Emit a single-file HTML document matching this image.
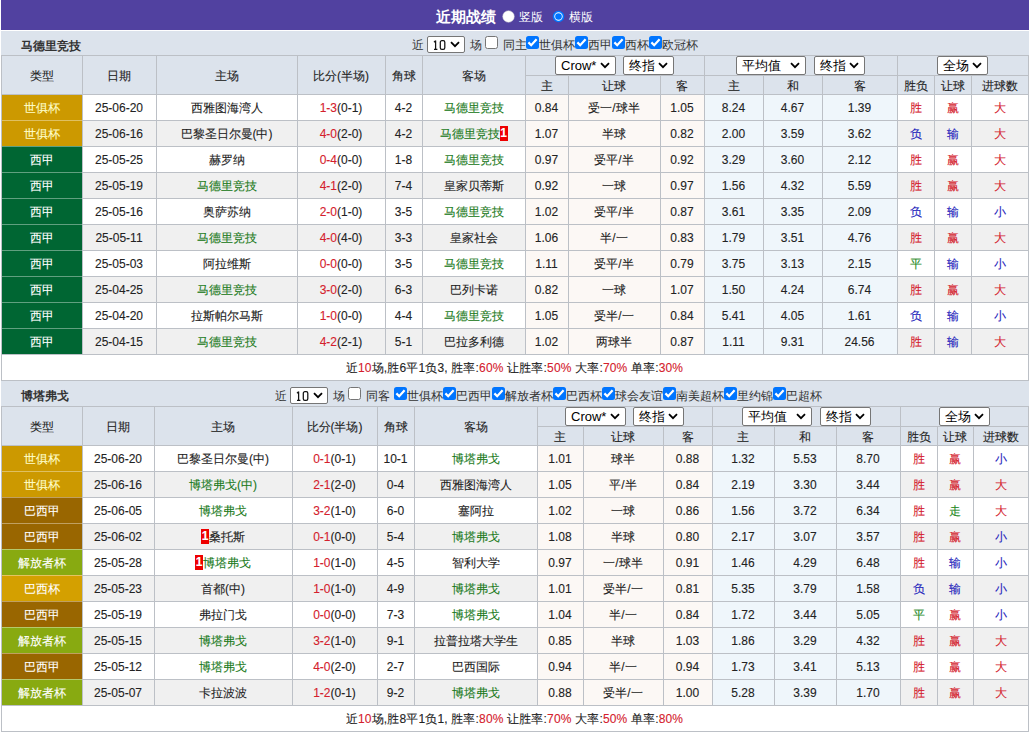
<!DOCTYPE html>
<html><head><meta charset="utf-8"><title>近期战绩</title>
<style>
html,body{margin:0;padding:0;background:#fff;}
body{width:1033px;height:734px;position:relative;overflow:hidden;font-family:"Liberation Sans",sans-serif;font-size:12px;color:#222;}
body>div{position:absolute;}
.t{-webkit-text-stroke:0.1px currentColor;text-align:center;white-space:nowrap;overflow:hidden;}
.l{white-space:nowrap;}
.sel{border:1px solid #767676;border-radius:2px;background:#fff;color:#000;box-sizing:content-box;}
.bd{display:inline-block;background:#e00;color:#fff;font-weight:bold;width:8px;height:15px;line-height:15px;text-align:center;vertical-align:middle;font-size:12px;position:relative;top:-1px;}
</style></head><body>
<div style="left:1px;top:0px;width:1028px;height:30px;background:#5141a0;"></div>
<div class="l" style="left:436px;top:8px;font-size:15px;font-weight:bold;color:#fff;line-height:18px">近期战绩</div>
<div style="left:502px;top:10px;width:13px;height:13px"><svg width="13" height="13"><circle cx="6.5" cy="6.5" r="5.8" fill="#fff" stroke="#ccc" stroke-width="0.5"/></svg></div>
<div class="l" style="left:519px;top:10px;font-size:12px;color:#fff;line-height:15px">竖版</div>
<div style="left:552px;top:10px;width:13px;height:13px"><svg width="13" height="13"><circle cx="6.5" cy="6.5" r="5" fill="#fff" stroke="#0075ff" stroke-width="1.6"/><circle cx="6.5" cy="6.5" r="3.3" fill="#0075ff"/></svg></div>
<div class="l" style="left:569px;top:10px;font-size:12px;color:#fff;line-height:15px">横版</div>
<div style="left:1px;top:30px;width:1028px;height:1px;background:#fff;"></div>
<div style="left:1px;top:31px;width:1028px;height:24px;background:#dce3ec;"></div>
<div class="l" style="left:21px;top:39px;font-weight:bold;font-size:12px;line-height:14px;color:#333">马德里竞技</div>
<div class="l" style="left:412px;top:38px;line-height:14px;color:#333">近</div>
<div class="sel" style="left:427px;top:36px;width:36px;height:15px;"><span style="position:absolute;left:5px;top:0;line-height:15px;font-size:13px"><svg width="22" height="15" style="position:absolute;left:-5px;top:0"><path d="M7.6 3.6 V12.3 M6 5.2 L7.6 3.6 M6 12.4 H9.4" stroke="#111" stroke-width="1.25" fill="none"/><rect x="12.3" y="3.7" width="4.5" height="8.6" rx="1.6" stroke="#111" stroke-width="1.25" fill="none"/></svg></span><span style="position:absolute;right:4px;top:4px;line-height:0"><svg width="10" height="7" viewBox="0 0 10 7"><path d="M1 1.2 L5 5.2 L9 1.2" stroke="#000" stroke-width="1.8" fill="none"/></svg></span></div>
<div class="l" style="left:470px;top:38px;line-height:14px;color:#333">场</div>
<div style="left:485px;top:36px;width:13px;height:13px"><svg width="13" height="13" viewBox="0 0 13 13"><rect x="0.5" y="0.5" width="12" height="12" rx="2" fill="#fff" stroke="#767676" stroke-width="1"/></svg></div>
<div class="l" style="left:503px;top:38px;line-height:14px;color:#333">同主</div>
<div style="left:526px;top:36px;width:13px;height:13px"><svg width="13" height="13" viewBox="0 0 13 13"><rect x="0" y="0" width="13" height="13" rx="2.5" fill="#0075ff"/><path d="M2.4 6.4 L5.2 9.2 L10.6 3.3" stroke="#fff" stroke-width="2.2" fill="none" stroke-linecap="butt"/></svg></div>
<div class="l" style="left:539px;top:38px;line-height:14px;color:#333">世俱杯</div>
<div style="left:575px;top:36px;width:13px;height:13px"><svg width="13" height="13" viewBox="0 0 13 13"><rect x="0" y="0" width="13" height="13" rx="2.5" fill="#0075ff"/><path d="M2.4 6.4 L5.2 9.2 L10.6 3.3" stroke="#fff" stroke-width="2.2" fill="none" stroke-linecap="butt"/></svg></div>
<div class="l" style="left:588px;top:38px;line-height:14px;color:#333">西甲</div>
<div style="left:612px;top:36px;width:13px;height:13px"><svg width="13" height="13" viewBox="0 0 13 13"><rect x="0" y="0" width="13" height="13" rx="2.5" fill="#0075ff"/><path d="M2.4 6.4 L5.2 9.2 L10.6 3.3" stroke="#fff" stroke-width="2.2" fill="none" stroke-linecap="butt"/></svg></div>
<div class="l" style="left:625px;top:38px;line-height:14px;color:#333">西杯</div>
<div style="left:649px;top:36px;width:13px;height:13px"><svg width="13" height="13" viewBox="0 0 13 13"><rect x="0" y="0" width="13" height="13" rx="2.5" fill="#0075ff"/><path d="M2.4 6.4 L5.2 9.2 L10.6 3.3" stroke="#fff" stroke-width="2.2" fill="none" stroke-linecap="butt"/></svg></div>
<div class="l" style="left:662px;top:38px;line-height:14px;color:#333">欧冠杯</div>
<div style="left:1px;top:55px;width:1028px;height:39px;background:#dce3ec;"></div>
<div style="left:1px;top:94px;width:1027px;height:26px;background:#fff;"></div>
<div style="left:525px;top:94px;width:179px;height:26px;background:#fcf8f5;"></div>
<div style="left:704px;top:94px;width:193px;height:26px;background:#eff6fb;"></div>
<div style="left:1px;top:94px;width:81px;height:26px;background:#cc9900;"></div>
<div style="left:1px;top:120px;width:1027px;height:26px;background:#f0f0f0;"></div>
<div style="left:525px;top:120px;width:179px;height:26px;background:#fcf8f5;"></div>
<div style="left:704px;top:120px;width:193px;height:26px;background:#eff6fb;"></div>
<div style="left:1px;top:120px;width:81px;height:26px;background:#cc9900;"></div>
<div style="left:1px;top:146px;width:1027px;height:26px;background:#fff;"></div>
<div style="left:525px;top:146px;width:179px;height:26px;background:#fcf8f5;"></div>
<div style="left:704px;top:146px;width:193px;height:26px;background:#eff6fb;"></div>
<div style="left:1px;top:146px;width:81px;height:26px;background:#006633;"></div>
<div style="left:1px;top:172px;width:1027px;height:26px;background:#f0f0f0;"></div>
<div style="left:525px;top:172px;width:179px;height:26px;background:#fcf8f5;"></div>
<div style="left:704px;top:172px;width:193px;height:26px;background:#eff6fb;"></div>
<div style="left:1px;top:172px;width:81px;height:26px;background:#006633;"></div>
<div style="left:1px;top:198px;width:1027px;height:26px;background:#fff;"></div>
<div style="left:525px;top:198px;width:179px;height:26px;background:#fcf8f5;"></div>
<div style="left:704px;top:198px;width:193px;height:26px;background:#eff6fb;"></div>
<div style="left:1px;top:198px;width:81px;height:26px;background:#006633;"></div>
<div style="left:1px;top:224px;width:1027px;height:26px;background:#f0f0f0;"></div>
<div style="left:525px;top:224px;width:179px;height:26px;background:#fcf8f5;"></div>
<div style="left:704px;top:224px;width:193px;height:26px;background:#eff6fb;"></div>
<div style="left:1px;top:224px;width:81px;height:26px;background:#006633;"></div>
<div style="left:1px;top:250px;width:1027px;height:26px;background:#fff;"></div>
<div style="left:525px;top:250px;width:179px;height:26px;background:#fcf8f5;"></div>
<div style="left:704px;top:250px;width:193px;height:26px;background:#eff6fb;"></div>
<div style="left:1px;top:250px;width:81px;height:26px;background:#006633;"></div>
<div style="left:1px;top:276px;width:1027px;height:26px;background:#f0f0f0;"></div>
<div style="left:525px;top:276px;width:179px;height:26px;background:#fcf8f5;"></div>
<div style="left:704px;top:276px;width:193px;height:26px;background:#eff6fb;"></div>
<div style="left:1px;top:276px;width:81px;height:26px;background:#006633;"></div>
<div style="left:1px;top:302px;width:1027px;height:26px;background:#fff;"></div>
<div style="left:525px;top:302px;width:179px;height:26px;background:#fcf8f5;"></div>
<div style="left:704px;top:302px;width:193px;height:26px;background:#eff6fb;"></div>
<div style="left:1px;top:302px;width:81px;height:26px;background:#006633;"></div>
<div style="left:1px;top:328px;width:1027px;height:26px;background:#f0f0f0;"></div>
<div style="left:525px;top:328px;width:179px;height:26px;background:#fcf8f5;"></div>
<div style="left:704px;top:328px;width:193px;height:26px;background:#eff6fb;"></div>
<div style="left:1px;top:328px;width:81px;height:26px;background:#006633;"></div>
<div style="left:1px;top:354px;width:1028px;height:26px;background:#fff;"></div>
<div style="left:1px;top:55px;width:1028px;height:1px;background:#bcc0c6;"></div>
<div style="left:1px;top:94px;width:1028px;height:1px;background:#bcc0c6;"></div>
<div style="left:525px;top:75px;width:504px;height:1px;background:#bcc0c6;"></div>
<div style="left:1px;top:94px;width:1028px;height:1px;background:#bcc0c6;"></div>
<div style="left:1px;top:120px;width:1028px;height:1px;background:#bcc0c6;"></div>
<div style="left:1px;top:146px;width:1028px;height:1px;background:#bcc0c6;"></div>
<div style="left:1px;top:172px;width:1028px;height:1px;background:#bcc0c6;"></div>
<div style="left:1px;top:198px;width:1028px;height:1px;background:#bcc0c6;"></div>
<div style="left:1px;top:224px;width:1028px;height:1px;background:#bcc0c6;"></div>
<div style="left:1px;top:250px;width:1028px;height:1px;background:#bcc0c6;"></div>
<div style="left:1px;top:276px;width:1028px;height:1px;background:#bcc0c6;"></div>
<div style="left:1px;top:302px;width:1028px;height:1px;background:#bcc0c6;"></div>
<div style="left:1px;top:328px;width:1028px;height:1px;background:#bcc0c6;"></div>
<div style="left:1px;top:354px;width:1028px;height:1px;background:#bcc0c6;"></div>
<div style="left:1px;top:380px;width:1028px;height:1px;background:#bcc0c6;"></div>
<div style="left:1px;top:55px;width:1px;height:326px;background:#bcc0c6;"></div>
<div style="left:1028px;top:55px;width:1px;height:326px;background:#bcc0c6;"></div>
<div style="left:82px;top:55px;width:1px;height:300px;background:#bcc0c6;"></div>
<div style="left:156px;top:55px;width:1px;height:300px;background:#bcc0c6;"></div>
<div style="left:297px;top:55px;width:1px;height:300px;background:#bcc0c6;"></div>
<div style="left:385px;top:55px;width:1px;height:300px;background:#bcc0c6;"></div>
<div style="left:422px;top:55px;width:1px;height:300px;background:#bcc0c6;"></div>
<div style="left:525px;top:55px;width:1px;height:300px;background:#bcc0c6;"></div>
<div style="left:704px;top:55px;width:1px;height:300px;background:#bcc0c6;"></div>
<div style="left:897px;top:55px;width:1px;height:300px;background:#bcc0c6;"></div>
<div style="left:568px;top:75px;width:1px;height:280px;background:#bcc0c6;"></div>
<div style="left:660px;top:75px;width:1px;height:280px;background:#bcc0c6;"></div>
<div style="left:763px;top:75px;width:1px;height:280px;background:#bcc0c6;"></div>
<div style="left:822px;top:75px;width:1px;height:280px;background:#bcc0c6;"></div>
<div style="left:934px;top:75px;width:1px;height:280px;background:#bcc0c6;"></div>
<div style="left:971px;top:75px;width:1px;height:280px;background:#bcc0c6;"></div>
<div style="left:2px;top:120px;width:80px;height:1px;background:#cc9900;"></div>
<div style="left:2px;top:120px;width:80px;height:1px;background:rgba(255,255,255,0.38);"></div>
<div style="left:2px;top:146px;width:80px;height:1px;background:#006633;"></div>
<div style="left:2px;top:146px;width:80px;height:1px;background:rgba(255,255,255,0.38);"></div>
<div style="left:2px;top:172px;width:80px;height:1px;background:#006633;"></div>
<div style="left:2px;top:172px;width:80px;height:1px;background:rgba(255,255,255,0.38);"></div>
<div style="left:2px;top:198px;width:80px;height:1px;background:#006633;"></div>
<div style="left:2px;top:198px;width:80px;height:1px;background:rgba(255,255,255,0.38);"></div>
<div style="left:2px;top:224px;width:80px;height:1px;background:#006633;"></div>
<div style="left:2px;top:224px;width:80px;height:1px;background:rgba(255,255,255,0.38);"></div>
<div style="left:2px;top:250px;width:80px;height:1px;background:#006633;"></div>
<div style="left:2px;top:250px;width:80px;height:1px;background:rgba(255,255,255,0.38);"></div>
<div style="left:2px;top:276px;width:80px;height:1px;background:#006633;"></div>
<div style="left:2px;top:276px;width:80px;height:1px;background:rgba(255,255,255,0.38);"></div>
<div style="left:2px;top:302px;width:80px;height:1px;background:#006633;"></div>
<div style="left:2px;top:302px;width:80px;height:1px;background:rgba(255,255,255,0.38);"></div>
<div style="left:2px;top:328px;width:80px;height:1px;background:#006633;"></div>
<div style="left:2px;top:328px;width:80px;height:1px;background:rgba(255,255,255,0.38);"></div>
<div class="t" style="left:1px;top:57px;width:81px;height:38px;line-height:38px;color:#222">类型</div>
<div class="t" style="left:82px;top:57px;width:74px;height:38px;line-height:38px;color:#222">日期</div>
<div class="t" style="left:156px;top:57px;width:141px;height:38px;line-height:38px;color:#222">主场</div>
<div class="t" style="left:297px;top:57px;width:88px;height:38px;line-height:38px;color:#222">比分(半场)</div>
<div class="t" style="left:385px;top:57px;width:37px;height:38px;line-height:38px;color:#222">角球</div>
<div class="t" style="left:422px;top:57px;width:103px;height:38px;line-height:38px;color:#222">客场</div>
<div class="t" style="left:525px;top:77px;width:43px;height:18px;line-height:18px;color:#222">主</div>
<div class="t" style="left:568px;top:77px;width:92px;height:18px;line-height:18px;color:#222">让球</div>
<div class="t" style="left:660px;top:77px;width:44px;height:18px;line-height:18px;color:#222">客</div>
<div class="t" style="left:704px;top:77px;width:59px;height:18px;line-height:18px;color:#222">主</div>
<div class="t" style="left:763px;top:77px;width:59px;height:18px;line-height:18px;color:#222">和</div>
<div class="t" style="left:822px;top:77px;width:75px;height:18px;line-height:18px;color:#222">客</div>
<div class="t" style="left:897px;top:77px;width:37px;height:18px;line-height:18px;color:#222">胜负</div>
<div class="t" style="left:934px;top:77px;width:37px;height:18px;line-height:18px;color:#222">让球</div>
<div class="t" style="left:971px;top:77px;width:57px;height:18px;line-height:18px;color:#222">进球数</div>
<div class="sel" style="left:555px;top:56px;width:59px;height:17px;"><span style="position:absolute;left:5px;top:0;line-height:17px;font-size:13px">Crow*</span><span style="position:absolute;right:5px;top:5px;line-height:0"><svg width="10" height="7" viewBox="0 0 10 7"><path d="M1 1.2 L5 5.2 L9 1.2" stroke="#000" stroke-width="1.8" fill="none"/></svg></span></div>
<div class="sel" style="left:623px;top:56px;width:49px;height:17px;"><span style="position:absolute;left:5px;top:0;line-height:17px;font-size:13px">终指</span><span style="position:absolute;right:5px;top:5px;line-height:0"><svg width="10" height="7" viewBox="0 0 10 7"><path d="M1 1.2 L5 5.2 L9 1.2" stroke="#000" stroke-width="1.8" fill="none"/></svg></span></div>
<div class="sel" style="left:736px;top:56px;width:68px;height:17px;"><span style="position:absolute;left:5px;top:0;line-height:17px;font-size:13px">平均值</span><span style="position:absolute;right:5px;top:5px;line-height:0"><svg width="10" height="7" viewBox="0 0 10 7"><path d="M1 1.2 L5 5.2 L9 1.2" stroke="#000" stroke-width="1.8" fill="none"/></svg></span></div>
<div class="sel" style="left:814px;top:56px;width:49px;height:17px;"><span style="position:absolute;left:5px;top:0;line-height:17px;font-size:13px">终指</span><span style="position:absolute;right:5px;top:5px;line-height:0"><svg width="10" height="7" viewBox="0 0 10 7"><path d="M1 1.2 L5 5.2 L9 1.2" stroke="#000" stroke-width="1.8" fill="none"/></svg></span></div>
<div class="sel" style="left:937px;top:56px;width:49px;height:17px;"><span style="position:absolute;left:5px;top:0;line-height:17px;font-size:13px">全场</span><span style="position:absolute;right:5px;top:5px;line-height:0"><svg width="10" height="7" viewBox="0 0 10 7"><path d="M1 1.2 L5 5.2 L9 1.2" stroke="#000" stroke-width="1.8" fill="none"/></svg></span></div>
<div class="t" style="left:1px;top:96px;width:81px;height:25px;line-height:25px;color:#ffffcc">世俱杯</div>
<div class="t" style="left:82px;top:96px;width:74px;height:25px;line-height:25px;">25-06-20</div>
<div class="t" style="left:156px;top:96px;width:141px;height:25px;line-height:25px;">西雅图海湾人</div>
<div class="t" style="left:297px;top:96px;width:88px;height:25px;line-height:25px;"><span style="color:#d4202c">1-3</span>(0-1)</div>
<div class="t" style="left:385px;top:96px;width:37px;height:25px;line-height:25px;">4-2</div>
<div class="t" style="left:422px;top:96px;width:103px;height:25px;line-height:25px;color:#1a7a1a">马德里竞技</div>
<div class="t" style="left:525px;top:96px;width:43px;height:25px;line-height:25px;">0.84</div>
<div class="t" style="left:568px;top:96px;width:92px;height:25px;line-height:25px;">受一/球半</div>
<div class="t" style="left:660px;top:96px;width:44px;height:25px;line-height:25px;">1.05</div>
<div class="t" style="left:704px;top:96px;width:59px;height:25px;line-height:25px;">8.24</div>
<div class="t" style="left:763px;top:96px;width:59px;height:25px;line-height:25px;">4.67</div>
<div class="t" style="left:822px;top:96px;width:75px;height:25px;line-height:25px;">1.39</div>
<div class="t" style="left:897px;top:96px;width:37px;height:25px;line-height:25px;color:#d4202c">胜</div>
<div class="t" style="left:934px;top:96px;width:37px;height:25px;line-height:25px;color:#d4202c">赢</div>
<div class="t" style="left:971px;top:96px;width:57px;height:25px;line-height:25px;color:#d4202c">大</div>
<div class="t" style="left:1px;top:122px;width:81px;height:25px;line-height:25px;color:#ffffcc">世俱杯</div>
<div class="t" style="left:82px;top:122px;width:74px;height:25px;line-height:25px;">25-06-16</div>
<div class="t" style="left:156px;top:122px;width:141px;height:25px;line-height:25px;">巴黎圣日尔曼(中)</div>
<div class="t" style="left:297px;top:122px;width:88px;height:25px;line-height:25px;"><span style="color:#d4202c">4-0</span>(2-0)</div>
<div class="t" style="left:385px;top:122px;width:37px;height:25px;line-height:25px;">4-2</div>
<div class="t" style="left:422px;top:122px;width:103px;height:25px;line-height:25px;color:#1a7a1a">马德里竞技<span class="bd">1</span></div>
<div class="t" style="left:525px;top:122px;width:43px;height:25px;line-height:25px;">1.07</div>
<div class="t" style="left:568px;top:122px;width:92px;height:25px;line-height:25px;">半球</div>
<div class="t" style="left:660px;top:122px;width:44px;height:25px;line-height:25px;">0.82</div>
<div class="t" style="left:704px;top:122px;width:59px;height:25px;line-height:25px;">2.00</div>
<div class="t" style="left:763px;top:122px;width:59px;height:25px;line-height:25px;">3.59</div>
<div class="t" style="left:822px;top:122px;width:75px;height:25px;line-height:25px;">3.62</div>
<div class="t" style="left:897px;top:122px;width:37px;height:25px;line-height:25px;color:#2222bb">负</div>
<div class="t" style="left:934px;top:122px;width:37px;height:25px;line-height:25px;color:#2222bb">输</div>
<div class="t" style="left:971px;top:122px;width:57px;height:25px;line-height:25px;color:#d4202c">大</div>
<div class="t" style="left:1px;top:148px;width:81px;height:25px;line-height:25px;color:#ffffff">西甲</div>
<div class="t" style="left:82px;top:148px;width:74px;height:25px;line-height:25px;">25-05-25</div>
<div class="t" style="left:156px;top:148px;width:141px;height:25px;line-height:25px;">赫罗纳</div>
<div class="t" style="left:297px;top:148px;width:88px;height:25px;line-height:25px;"><span style="color:#d4202c">0-4</span>(0-0)</div>
<div class="t" style="left:385px;top:148px;width:37px;height:25px;line-height:25px;">1-8</div>
<div class="t" style="left:422px;top:148px;width:103px;height:25px;line-height:25px;color:#1a7a1a">马德里竞技</div>
<div class="t" style="left:525px;top:148px;width:43px;height:25px;line-height:25px;">0.97</div>
<div class="t" style="left:568px;top:148px;width:92px;height:25px;line-height:25px;">受平/半</div>
<div class="t" style="left:660px;top:148px;width:44px;height:25px;line-height:25px;">0.92</div>
<div class="t" style="left:704px;top:148px;width:59px;height:25px;line-height:25px;">3.29</div>
<div class="t" style="left:763px;top:148px;width:59px;height:25px;line-height:25px;">3.60</div>
<div class="t" style="left:822px;top:148px;width:75px;height:25px;line-height:25px;">2.12</div>
<div class="t" style="left:897px;top:148px;width:37px;height:25px;line-height:25px;color:#d4202c">胜</div>
<div class="t" style="left:934px;top:148px;width:37px;height:25px;line-height:25px;color:#d4202c">赢</div>
<div class="t" style="left:971px;top:148px;width:57px;height:25px;line-height:25px;color:#d4202c">大</div>
<div class="t" style="left:1px;top:174px;width:81px;height:25px;line-height:25px;color:#ffffff">西甲</div>
<div class="t" style="left:82px;top:174px;width:74px;height:25px;line-height:25px;">25-05-19</div>
<div class="t" style="left:156px;top:174px;width:141px;height:25px;line-height:25px;color:#1a7a1a">马德里竞技</div>
<div class="t" style="left:297px;top:174px;width:88px;height:25px;line-height:25px;"><span style="color:#d4202c">4-1</span>(2-0)</div>
<div class="t" style="left:385px;top:174px;width:37px;height:25px;line-height:25px;">7-4</div>
<div class="t" style="left:422px;top:174px;width:103px;height:25px;line-height:25px;">皇家贝蒂斯</div>
<div class="t" style="left:525px;top:174px;width:43px;height:25px;line-height:25px;">0.92</div>
<div class="t" style="left:568px;top:174px;width:92px;height:25px;line-height:25px;">一球</div>
<div class="t" style="left:660px;top:174px;width:44px;height:25px;line-height:25px;">0.97</div>
<div class="t" style="left:704px;top:174px;width:59px;height:25px;line-height:25px;">1.56</div>
<div class="t" style="left:763px;top:174px;width:59px;height:25px;line-height:25px;">4.32</div>
<div class="t" style="left:822px;top:174px;width:75px;height:25px;line-height:25px;">5.59</div>
<div class="t" style="left:897px;top:174px;width:37px;height:25px;line-height:25px;color:#d4202c">胜</div>
<div class="t" style="left:934px;top:174px;width:37px;height:25px;line-height:25px;color:#d4202c">赢</div>
<div class="t" style="left:971px;top:174px;width:57px;height:25px;line-height:25px;color:#d4202c">大</div>
<div class="t" style="left:1px;top:200px;width:81px;height:25px;line-height:25px;color:#ffffff">西甲</div>
<div class="t" style="left:82px;top:200px;width:74px;height:25px;line-height:25px;">25-05-16</div>
<div class="t" style="left:156px;top:200px;width:141px;height:25px;line-height:25px;">奥萨苏纳</div>
<div class="t" style="left:297px;top:200px;width:88px;height:25px;line-height:25px;"><span style="color:#d4202c">2-0</span>(1-0)</div>
<div class="t" style="left:385px;top:200px;width:37px;height:25px;line-height:25px;">3-5</div>
<div class="t" style="left:422px;top:200px;width:103px;height:25px;line-height:25px;color:#1a7a1a">马德里竞技</div>
<div class="t" style="left:525px;top:200px;width:43px;height:25px;line-height:25px;">1.02</div>
<div class="t" style="left:568px;top:200px;width:92px;height:25px;line-height:25px;">受平/半</div>
<div class="t" style="left:660px;top:200px;width:44px;height:25px;line-height:25px;">0.87</div>
<div class="t" style="left:704px;top:200px;width:59px;height:25px;line-height:25px;">3.61</div>
<div class="t" style="left:763px;top:200px;width:59px;height:25px;line-height:25px;">3.35</div>
<div class="t" style="left:822px;top:200px;width:75px;height:25px;line-height:25px;">2.09</div>
<div class="t" style="left:897px;top:200px;width:37px;height:25px;line-height:25px;color:#2222bb">负</div>
<div class="t" style="left:934px;top:200px;width:37px;height:25px;line-height:25px;color:#2222bb">输</div>
<div class="t" style="left:971px;top:200px;width:57px;height:25px;line-height:25px;color:#2222bb">小</div>
<div class="t" style="left:1px;top:226px;width:81px;height:25px;line-height:25px;color:#ffffff">西甲</div>
<div class="t" style="left:82px;top:226px;width:74px;height:25px;line-height:25px;">25-05-11</div>
<div class="t" style="left:156px;top:226px;width:141px;height:25px;line-height:25px;color:#1a7a1a">马德里竞技</div>
<div class="t" style="left:297px;top:226px;width:88px;height:25px;line-height:25px;"><span style="color:#d4202c">4-0</span>(4-0)</div>
<div class="t" style="left:385px;top:226px;width:37px;height:25px;line-height:25px;">3-3</div>
<div class="t" style="left:422px;top:226px;width:103px;height:25px;line-height:25px;">皇家社会</div>
<div class="t" style="left:525px;top:226px;width:43px;height:25px;line-height:25px;">1.06</div>
<div class="t" style="left:568px;top:226px;width:92px;height:25px;line-height:25px;">半/一</div>
<div class="t" style="left:660px;top:226px;width:44px;height:25px;line-height:25px;">0.83</div>
<div class="t" style="left:704px;top:226px;width:59px;height:25px;line-height:25px;">1.79</div>
<div class="t" style="left:763px;top:226px;width:59px;height:25px;line-height:25px;">3.51</div>
<div class="t" style="left:822px;top:226px;width:75px;height:25px;line-height:25px;">4.76</div>
<div class="t" style="left:897px;top:226px;width:37px;height:25px;line-height:25px;color:#d4202c">胜</div>
<div class="t" style="left:934px;top:226px;width:37px;height:25px;line-height:25px;color:#d4202c">赢</div>
<div class="t" style="left:971px;top:226px;width:57px;height:25px;line-height:25px;color:#d4202c">大</div>
<div class="t" style="left:1px;top:252px;width:81px;height:25px;line-height:25px;color:#ffffff">西甲</div>
<div class="t" style="left:82px;top:252px;width:74px;height:25px;line-height:25px;">25-05-03</div>
<div class="t" style="left:156px;top:252px;width:141px;height:25px;line-height:25px;">阿拉维斯</div>
<div class="t" style="left:297px;top:252px;width:88px;height:25px;line-height:25px;"><span style="color:#d4202c">0-0</span>(0-0)</div>
<div class="t" style="left:385px;top:252px;width:37px;height:25px;line-height:25px;">3-5</div>
<div class="t" style="left:422px;top:252px;width:103px;height:25px;line-height:25px;color:#1a7a1a">马德里竞技</div>
<div class="t" style="left:525px;top:252px;width:43px;height:25px;line-height:25px;">1.11</div>
<div class="t" style="left:568px;top:252px;width:92px;height:25px;line-height:25px;">受平/半</div>
<div class="t" style="left:660px;top:252px;width:44px;height:25px;line-height:25px;">0.79</div>
<div class="t" style="left:704px;top:252px;width:59px;height:25px;line-height:25px;">3.75</div>
<div class="t" style="left:763px;top:252px;width:59px;height:25px;line-height:25px;">3.13</div>
<div class="t" style="left:822px;top:252px;width:75px;height:25px;line-height:25px;">2.15</div>
<div class="t" style="left:897px;top:252px;width:37px;height:25px;line-height:25px;color:#228822">平</div>
<div class="t" style="left:934px;top:252px;width:37px;height:25px;line-height:25px;color:#2222bb">输</div>
<div class="t" style="left:971px;top:252px;width:57px;height:25px;line-height:25px;color:#2222bb">小</div>
<div class="t" style="left:1px;top:278px;width:81px;height:25px;line-height:25px;color:#ffffff">西甲</div>
<div class="t" style="left:82px;top:278px;width:74px;height:25px;line-height:25px;">25-04-25</div>
<div class="t" style="left:156px;top:278px;width:141px;height:25px;line-height:25px;color:#1a7a1a">马德里竞技</div>
<div class="t" style="left:297px;top:278px;width:88px;height:25px;line-height:25px;"><span style="color:#d4202c">3-0</span>(2-0)</div>
<div class="t" style="left:385px;top:278px;width:37px;height:25px;line-height:25px;">6-3</div>
<div class="t" style="left:422px;top:278px;width:103px;height:25px;line-height:25px;">巴列卡诺</div>
<div class="t" style="left:525px;top:278px;width:43px;height:25px;line-height:25px;">0.82</div>
<div class="t" style="left:568px;top:278px;width:92px;height:25px;line-height:25px;">一球</div>
<div class="t" style="left:660px;top:278px;width:44px;height:25px;line-height:25px;">1.07</div>
<div class="t" style="left:704px;top:278px;width:59px;height:25px;line-height:25px;">1.50</div>
<div class="t" style="left:763px;top:278px;width:59px;height:25px;line-height:25px;">4.24</div>
<div class="t" style="left:822px;top:278px;width:75px;height:25px;line-height:25px;">6.74</div>
<div class="t" style="left:897px;top:278px;width:37px;height:25px;line-height:25px;color:#d4202c">胜</div>
<div class="t" style="left:934px;top:278px;width:37px;height:25px;line-height:25px;color:#d4202c">赢</div>
<div class="t" style="left:971px;top:278px;width:57px;height:25px;line-height:25px;color:#d4202c">大</div>
<div class="t" style="left:1px;top:304px;width:81px;height:25px;line-height:25px;color:#ffffff">西甲</div>
<div class="t" style="left:82px;top:304px;width:74px;height:25px;line-height:25px;">25-04-20</div>
<div class="t" style="left:156px;top:304px;width:141px;height:25px;line-height:25px;">拉斯帕尔马斯</div>
<div class="t" style="left:297px;top:304px;width:88px;height:25px;line-height:25px;"><span style="color:#d4202c">1-0</span>(0-0)</div>
<div class="t" style="left:385px;top:304px;width:37px;height:25px;line-height:25px;">4-4</div>
<div class="t" style="left:422px;top:304px;width:103px;height:25px;line-height:25px;color:#1a7a1a">马德里竞技</div>
<div class="t" style="left:525px;top:304px;width:43px;height:25px;line-height:25px;">1.05</div>
<div class="t" style="left:568px;top:304px;width:92px;height:25px;line-height:25px;">受半/一</div>
<div class="t" style="left:660px;top:304px;width:44px;height:25px;line-height:25px;">0.84</div>
<div class="t" style="left:704px;top:304px;width:59px;height:25px;line-height:25px;">5.41</div>
<div class="t" style="left:763px;top:304px;width:59px;height:25px;line-height:25px;">4.05</div>
<div class="t" style="left:822px;top:304px;width:75px;height:25px;line-height:25px;">1.61</div>
<div class="t" style="left:897px;top:304px;width:37px;height:25px;line-height:25px;color:#2222bb">负</div>
<div class="t" style="left:934px;top:304px;width:37px;height:25px;line-height:25px;color:#2222bb">输</div>
<div class="t" style="left:971px;top:304px;width:57px;height:25px;line-height:25px;color:#2222bb">小</div>
<div class="t" style="left:1px;top:330px;width:81px;height:25px;line-height:25px;color:#ffffff">西甲</div>
<div class="t" style="left:82px;top:330px;width:74px;height:25px;line-height:25px;">25-04-15</div>
<div class="t" style="left:156px;top:330px;width:141px;height:25px;line-height:25px;color:#1a7a1a">马德里竞技</div>
<div class="t" style="left:297px;top:330px;width:88px;height:25px;line-height:25px;"><span style="color:#d4202c">4-2</span>(2-1)</div>
<div class="t" style="left:385px;top:330px;width:37px;height:25px;line-height:25px;">5-1</div>
<div class="t" style="left:422px;top:330px;width:103px;height:25px;line-height:25px;">巴拉多利德</div>
<div class="t" style="left:525px;top:330px;width:43px;height:25px;line-height:25px;">1.02</div>
<div class="t" style="left:568px;top:330px;width:92px;height:25px;line-height:25px;">两球半</div>
<div class="t" style="left:660px;top:330px;width:44px;height:25px;line-height:25px;">0.87</div>
<div class="t" style="left:704px;top:330px;width:59px;height:25px;line-height:25px;">1.11</div>
<div class="t" style="left:763px;top:330px;width:59px;height:25px;line-height:25px;">9.31</div>
<div class="t" style="left:822px;top:330px;width:75px;height:25px;line-height:25px;">24.56</div>
<div class="t" style="left:897px;top:330px;width:37px;height:25px;line-height:25px;color:#d4202c">胜</div>
<div class="t" style="left:934px;top:330px;width:37px;height:25px;line-height:25px;color:#2222bb">输</div>
<div class="t" style="left:971px;top:330px;width:57px;height:25px;line-height:25px;color:#d4202c">大</div>
<div class="t" style="left:1px;top:356px;width:1027px;height:25px;line-height:25px;letter-spacing:0.16px">近<span style="color:#d4202c">10</span>场,胜6平1负3, 胜率:<span style="color:#d4202c">60%</span> 让胜率:<span style="color:#d4202c">50%</span> 大率:<span style="color:#d4202c">70%</span> 单率:<span style="color:#d4202c">30%</span></div>
<div style="left:1px;top:381px;width:1028px;height:25px;background:#dce3ec;"></div>
<div class="l" style="left:21px;top:389px;font-weight:bold;font-size:12px;line-height:14px;color:#333">博塔弗戈</div>
<div class="l" style="left:275px;top:389px;line-height:14px;color:#333">近</div>
<div class="sel" style="left:290px;top:387px;width:36px;height:15px;"><span style="position:absolute;left:5px;top:0;line-height:15px;font-size:13px"><svg width="22" height="15" style="position:absolute;left:-5px;top:0"><path d="M7.6 3.6 V12.3 M6 5.2 L7.6 3.6 M6 12.4 H9.4" stroke="#111" stroke-width="1.25" fill="none"/><rect x="12.3" y="3.7" width="4.5" height="8.6" rx="1.6" stroke="#111" stroke-width="1.25" fill="none"/></svg></span><span style="position:absolute;right:4px;top:4px;line-height:0"><svg width="10" height="7" viewBox="0 0 10 7"><path d="M1 1.2 L5 5.2 L9 1.2" stroke="#000" stroke-width="1.8" fill="none"/></svg></span></div>
<div class="l" style="left:333px;top:389px;line-height:14px;color:#333">场</div>
<div style="left:348px;top:387px;width:13px;height:13px"><svg width="13" height="13" viewBox="0 0 13 13"><rect x="0.5" y="0.5" width="12" height="12" rx="2" fill="#fff" stroke="#767676" stroke-width="1"/></svg></div>
<div class="l" style="left:366px;top:389px;line-height:14px;color:#333">同客</div>
<div style="left:394px;top:387px;width:13px;height:13px"><svg width="13" height="13" viewBox="0 0 13 13"><rect x="0" y="0" width="13" height="13" rx="2.5" fill="#0075ff"/><path d="M2.4 6.4 L5.2 9.2 L10.6 3.3" stroke="#fff" stroke-width="2.2" fill="none" stroke-linecap="butt"/></svg></div>
<div class="l" style="left:407px;top:389px;line-height:14px;color:#333">世俱杯</div>
<div style="left:443px;top:387px;width:13px;height:13px"><svg width="13" height="13" viewBox="0 0 13 13"><rect x="0" y="0" width="13" height="13" rx="2.5" fill="#0075ff"/><path d="M2.4 6.4 L5.2 9.2 L10.6 3.3" stroke="#fff" stroke-width="2.2" fill="none" stroke-linecap="butt"/></svg></div>
<div class="l" style="left:456px;top:389px;line-height:14px;color:#333">巴西甲</div>
<div style="left:492px;top:387px;width:13px;height:13px"><svg width="13" height="13" viewBox="0 0 13 13"><rect x="0" y="0" width="13" height="13" rx="2.5" fill="#0075ff"/><path d="M2.4 6.4 L5.2 9.2 L10.6 3.3" stroke="#fff" stroke-width="2.2" fill="none" stroke-linecap="butt"/></svg></div>
<div class="l" style="left:505px;top:389px;line-height:14px;color:#333">解放者杯</div>
<div style="left:553px;top:387px;width:13px;height:13px"><svg width="13" height="13" viewBox="0 0 13 13"><rect x="0" y="0" width="13" height="13" rx="2.5" fill="#0075ff"/><path d="M2.4 6.4 L5.2 9.2 L10.6 3.3" stroke="#fff" stroke-width="2.2" fill="none" stroke-linecap="butt"/></svg></div>
<div class="l" style="left:566px;top:389px;line-height:14px;color:#333">巴西杯</div>
<div style="left:602px;top:387px;width:13px;height:13px"><svg width="13" height="13" viewBox="0 0 13 13"><rect x="0" y="0" width="13" height="13" rx="2.5" fill="#0075ff"/><path d="M2.4 6.4 L5.2 9.2 L10.6 3.3" stroke="#fff" stroke-width="2.2" fill="none" stroke-linecap="butt"/></svg></div>
<div class="l" style="left:615px;top:389px;line-height:14px;color:#333">球会友谊</div>
<div style="left:663px;top:387px;width:13px;height:13px"><svg width="13" height="13" viewBox="0 0 13 13"><rect x="0" y="0" width="13" height="13" rx="2.5" fill="#0075ff"/><path d="M2.4 6.4 L5.2 9.2 L10.6 3.3" stroke="#fff" stroke-width="2.2" fill="none" stroke-linecap="butt"/></svg></div>
<div class="l" style="left:676px;top:389px;line-height:14px;color:#333">南美超杯</div>
<div style="left:724px;top:387px;width:13px;height:13px"><svg width="13" height="13" viewBox="0 0 13 13"><rect x="0" y="0" width="13" height="13" rx="2.5" fill="#0075ff"/><path d="M2.4 6.4 L5.2 9.2 L10.6 3.3" stroke="#fff" stroke-width="2.2" fill="none" stroke-linecap="butt"/></svg></div>
<div class="l" style="left:737px;top:389px;line-height:14px;color:#333">里约锦</div>
<div style="left:773px;top:387px;width:13px;height:13px"><svg width="13" height="13" viewBox="0 0 13 13"><rect x="0" y="0" width="13" height="13" rx="2.5" fill="#0075ff"/><path d="M2.4 6.4 L5.2 9.2 L10.6 3.3" stroke="#fff" stroke-width="2.2" fill="none" stroke-linecap="butt"/></svg></div>
<div class="l" style="left:786px;top:389px;line-height:14px;color:#333">巴超杯</div>
<div style="left:1px;top:406px;width:1028px;height:39px;background:#dce3ec;"></div>
<div style="left:1px;top:445px;width:1027px;height:26px;background:#fff;"></div>
<div style="left:537px;top:445px;width:175px;height:26px;background:#fcf8f5;"></div>
<div style="left:712px;top:445px;width:188px;height:26px;background:#eff6fb;"></div>
<div style="left:1px;top:445px;width:81px;height:26px;background:#cc9900;"></div>
<div style="left:1px;top:471px;width:1027px;height:26px;background:#f0f0f0;"></div>
<div style="left:537px;top:471px;width:175px;height:26px;background:#fcf8f5;"></div>
<div style="left:712px;top:471px;width:188px;height:26px;background:#eff6fb;"></div>
<div style="left:1px;top:471px;width:81px;height:26px;background:#cc9900;"></div>
<div style="left:1px;top:497px;width:1027px;height:26px;background:#fff;"></div>
<div style="left:537px;top:497px;width:175px;height:26px;background:#fcf8f5;"></div>
<div style="left:712px;top:497px;width:188px;height:26px;background:#eff6fb;"></div>
<div style="left:1px;top:497px;width:81px;height:26px;background:#996600;"></div>
<div style="left:1px;top:523px;width:1027px;height:26px;background:#f0f0f0;"></div>
<div style="left:537px;top:523px;width:175px;height:26px;background:#fcf8f5;"></div>
<div style="left:712px;top:523px;width:188px;height:26px;background:#eff6fb;"></div>
<div style="left:1px;top:523px;width:81px;height:26px;background:#996600;"></div>
<div style="left:1px;top:549px;width:1027px;height:26px;background:#fff;"></div>
<div style="left:537px;top:549px;width:175px;height:26px;background:#fcf8f5;"></div>
<div style="left:712px;top:549px;width:188px;height:26px;background:#eff6fb;"></div>
<div style="left:1px;top:549px;width:81px;height:26px;background:#88aa11;"></div>
<div style="left:1px;top:575px;width:1027px;height:26px;background:#f0f0f0;"></div>
<div style="left:537px;top:575px;width:175px;height:26px;background:#fcf8f5;"></div>
<div style="left:712px;top:575px;width:188px;height:26px;background:#eff6fb;"></div>
<div style="left:1px;top:575px;width:81px;height:26px;background:#d4a000;"></div>
<div style="left:1px;top:601px;width:1027px;height:26px;background:#fff;"></div>
<div style="left:537px;top:601px;width:175px;height:26px;background:#fcf8f5;"></div>
<div style="left:712px;top:601px;width:188px;height:26px;background:#eff6fb;"></div>
<div style="left:1px;top:601px;width:81px;height:26px;background:#996600;"></div>
<div style="left:1px;top:627px;width:1027px;height:26px;background:#f0f0f0;"></div>
<div style="left:537px;top:627px;width:175px;height:26px;background:#fcf8f5;"></div>
<div style="left:712px;top:627px;width:188px;height:26px;background:#eff6fb;"></div>
<div style="left:1px;top:627px;width:81px;height:26px;background:#88aa11;"></div>
<div style="left:1px;top:653px;width:1027px;height:26px;background:#fff;"></div>
<div style="left:537px;top:653px;width:175px;height:26px;background:#fcf8f5;"></div>
<div style="left:712px;top:653px;width:188px;height:26px;background:#eff6fb;"></div>
<div style="left:1px;top:653px;width:81px;height:26px;background:#996600;"></div>
<div style="left:1px;top:679px;width:1027px;height:26px;background:#f0f0f0;"></div>
<div style="left:537px;top:679px;width:175px;height:26px;background:#fcf8f5;"></div>
<div style="left:712px;top:679px;width:188px;height:26px;background:#eff6fb;"></div>
<div style="left:1px;top:679px;width:81px;height:26px;background:#88aa11;"></div>
<div style="left:1px;top:705px;width:1028px;height:26px;background:#fff;"></div>
<div style="left:1px;top:406px;width:1028px;height:1px;background:#bcc0c6;"></div>
<div style="left:1px;top:445px;width:1028px;height:1px;background:#bcc0c6;"></div>
<div style="left:537px;top:426px;width:492px;height:1px;background:#bcc0c6;"></div>
<div style="left:1px;top:445px;width:1028px;height:1px;background:#bcc0c6;"></div>
<div style="left:1px;top:471px;width:1028px;height:1px;background:#bcc0c6;"></div>
<div style="left:1px;top:497px;width:1028px;height:1px;background:#bcc0c6;"></div>
<div style="left:1px;top:523px;width:1028px;height:1px;background:#bcc0c6;"></div>
<div style="left:1px;top:549px;width:1028px;height:1px;background:#bcc0c6;"></div>
<div style="left:1px;top:575px;width:1028px;height:1px;background:#bcc0c6;"></div>
<div style="left:1px;top:601px;width:1028px;height:1px;background:#bcc0c6;"></div>
<div style="left:1px;top:627px;width:1028px;height:1px;background:#bcc0c6;"></div>
<div style="left:1px;top:653px;width:1028px;height:1px;background:#bcc0c6;"></div>
<div style="left:1px;top:679px;width:1028px;height:1px;background:#bcc0c6;"></div>
<div style="left:1px;top:705px;width:1028px;height:1px;background:#bcc0c6;"></div>
<div style="left:1px;top:731px;width:1028px;height:1px;background:#bcc0c6;"></div>
<div style="left:1px;top:406px;width:1px;height:326px;background:#bcc0c6;"></div>
<div style="left:1028px;top:406px;width:1px;height:326px;background:#bcc0c6;"></div>
<div style="left:82px;top:406px;width:1px;height:300px;background:#bcc0c6;"></div>
<div style="left:154px;top:406px;width:1px;height:300px;background:#bcc0c6;"></div>
<div style="left:292px;top:406px;width:1px;height:300px;background:#bcc0c6;"></div>
<div style="left:377px;top:406px;width:1px;height:300px;background:#bcc0c6;"></div>
<div style="left:414px;top:406px;width:1px;height:300px;background:#bcc0c6;"></div>
<div style="left:537px;top:406px;width:1px;height:300px;background:#bcc0c6;"></div>
<div style="left:712px;top:406px;width:1px;height:300px;background:#bcc0c6;"></div>
<div style="left:900px;top:406px;width:1px;height:300px;background:#bcc0c6;"></div>
<div style="left:583px;top:426px;width:1px;height:280px;background:#bcc0c6;"></div>
<div style="left:663px;top:426px;width:1px;height:280px;background:#bcc0c6;"></div>
<div style="left:774px;top:426px;width:1px;height:280px;background:#bcc0c6;"></div>
<div style="left:836px;top:426px;width:1px;height:280px;background:#bcc0c6;"></div>
<div style="left:937px;top:426px;width:1px;height:280px;background:#bcc0c6;"></div>
<div style="left:973px;top:426px;width:1px;height:280px;background:#bcc0c6;"></div>
<div style="left:2px;top:471px;width:80px;height:1px;background:#cc9900;"></div>
<div style="left:2px;top:471px;width:80px;height:1px;background:rgba(255,255,255,0.38);"></div>
<div style="left:2px;top:497px;width:80px;height:1px;background:#996600;"></div>
<div style="left:2px;top:497px;width:80px;height:1px;background:rgba(255,255,255,0.38);"></div>
<div style="left:2px;top:523px;width:80px;height:1px;background:#996600;"></div>
<div style="left:2px;top:523px;width:80px;height:1px;background:rgba(255,255,255,0.38);"></div>
<div style="left:2px;top:549px;width:80px;height:1px;background:#88aa11;"></div>
<div style="left:2px;top:549px;width:80px;height:1px;background:rgba(255,255,255,0.38);"></div>
<div style="left:2px;top:575px;width:80px;height:1px;background:#d4a000;"></div>
<div style="left:2px;top:575px;width:80px;height:1px;background:rgba(255,255,255,0.38);"></div>
<div style="left:2px;top:601px;width:80px;height:1px;background:#996600;"></div>
<div style="left:2px;top:601px;width:80px;height:1px;background:rgba(255,255,255,0.38);"></div>
<div style="left:2px;top:627px;width:80px;height:1px;background:#88aa11;"></div>
<div style="left:2px;top:627px;width:80px;height:1px;background:rgba(255,255,255,0.38);"></div>
<div style="left:2px;top:653px;width:80px;height:1px;background:#996600;"></div>
<div style="left:2px;top:653px;width:80px;height:1px;background:rgba(255,255,255,0.38);"></div>
<div style="left:2px;top:679px;width:80px;height:1px;background:#88aa11;"></div>
<div style="left:2px;top:679px;width:80px;height:1px;background:rgba(255,255,255,0.38);"></div>
<div class="t" style="left:1px;top:408px;width:81px;height:38px;line-height:38px;color:#222">类型</div>
<div class="t" style="left:82px;top:408px;width:72px;height:38px;line-height:38px;color:#222">日期</div>
<div class="t" style="left:154px;top:408px;width:138px;height:38px;line-height:38px;color:#222">主场</div>
<div class="t" style="left:292px;top:408px;width:85px;height:38px;line-height:38px;color:#222">比分(半场)</div>
<div class="t" style="left:377px;top:408px;width:37px;height:38px;line-height:38px;color:#222">角球</div>
<div class="t" style="left:414px;top:408px;width:123px;height:38px;line-height:38px;color:#222">客场</div>
<div class="t" style="left:537px;top:428px;width:46px;height:18px;line-height:18px;color:#222">主</div>
<div class="t" style="left:583px;top:428px;width:80px;height:18px;line-height:18px;color:#222">让球</div>
<div class="t" style="left:663px;top:428px;width:49px;height:18px;line-height:18px;color:#222">客</div>
<div class="t" style="left:712px;top:428px;width:62px;height:18px;line-height:18px;color:#222">主</div>
<div class="t" style="left:774px;top:428px;width:62px;height:18px;line-height:18px;color:#222">和</div>
<div class="t" style="left:836px;top:428px;width:64px;height:18px;line-height:18px;color:#222">客</div>
<div class="t" style="left:900px;top:428px;width:37px;height:18px;line-height:18px;color:#222">胜负</div>
<div class="t" style="left:937px;top:428px;width:36px;height:18px;line-height:18px;color:#222">让球</div>
<div class="t" style="left:973px;top:428px;width:55px;height:18px;line-height:18px;color:#222">进球数</div>
<div class="sel" style="left:565px;top:407px;width:59px;height:17px;"><span style="position:absolute;left:5px;top:0;line-height:17px;font-size:13px">Crow*</span><span style="position:absolute;right:5px;top:5px;line-height:0"><svg width="10" height="7" viewBox="0 0 10 7"><path d="M1 1.2 L5 5.2 L9 1.2" stroke="#000" stroke-width="1.8" fill="none"/></svg></span></div>
<div class="sel" style="left:633px;top:407px;width:49px;height:17px;"><span style="position:absolute;left:5px;top:0;line-height:17px;font-size:13px">终指</span><span style="position:absolute;right:5px;top:5px;line-height:0"><svg width="10" height="7" viewBox="0 0 10 7"><path d="M1 1.2 L5 5.2 L9 1.2" stroke="#000" stroke-width="1.8" fill="none"/></svg></span></div>
<div class="sel" style="left:742px;top:407px;width:68px;height:17px;"><span style="position:absolute;left:5px;top:0;line-height:17px;font-size:13px">平均值</span><span style="position:absolute;right:5px;top:5px;line-height:0"><svg width="10" height="7" viewBox="0 0 10 7"><path d="M1 1.2 L5 5.2 L9 1.2" stroke="#000" stroke-width="1.8" fill="none"/></svg></span></div>
<div class="sel" style="left:820px;top:407px;width:49px;height:17px;"><span style="position:absolute;left:5px;top:0;line-height:17px;font-size:13px">终指</span><span style="position:absolute;right:5px;top:5px;line-height:0"><svg width="10" height="7" viewBox="0 0 10 7"><path d="M1 1.2 L5 5.2 L9 1.2" stroke="#000" stroke-width="1.8" fill="none"/></svg></span></div>
<div class="sel" style="left:939px;top:407px;width:49px;height:17px;"><span style="position:absolute;left:5px;top:0;line-height:17px;font-size:13px">全场</span><span style="position:absolute;right:5px;top:5px;line-height:0"><svg width="10" height="7" viewBox="0 0 10 7"><path d="M1 1.2 L5 5.2 L9 1.2" stroke="#000" stroke-width="1.8" fill="none"/></svg></span></div>
<div class="t" style="left:1px;top:447px;width:81px;height:25px;line-height:25px;color:#ffffcc">世俱杯</div>
<div class="t" style="left:82px;top:447px;width:72px;height:25px;line-height:25px;">25-06-20</div>
<div class="t" style="left:154px;top:447px;width:138px;height:25px;line-height:25px;">巴黎圣日尔曼(中)</div>
<div class="t" style="left:292px;top:447px;width:85px;height:25px;line-height:25px;"><span style="color:#d4202c">0-1</span>(0-1)</div>
<div class="t" style="left:377px;top:447px;width:37px;height:25px;line-height:25px;">10-1</div>
<div class="t" style="left:414px;top:447px;width:123px;height:25px;line-height:25px;color:#1a7a1a">博塔弗戈</div>
<div class="t" style="left:537px;top:447px;width:46px;height:25px;line-height:25px;">1.01</div>
<div class="t" style="left:583px;top:447px;width:80px;height:25px;line-height:25px;">球半</div>
<div class="t" style="left:663px;top:447px;width:49px;height:25px;line-height:25px;">0.88</div>
<div class="t" style="left:712px;top:447px;width:62px;height:25px;line-height:25px;">1.32</div>
<div class="t" style="left:774px;top:447px;width:62px;height:25px;line-height:25px;">5.53</div>
<div class="t" style="left:836px;top:447px;width:64px;height:25px;line-height:25px;">8.70</div>
<div class="t" style="left:900px;top:447px;width:37px;height:25px;line-height:25px;color:#d4202c">胜</div>
<div class="t" style="left:937px;top:447px;width:36px;height:25px;line-height:25px;color:#d4202c">赢</div>
<div class="t" style="left:973px;top:447px;width:55px;height:25px;line-height:25px;color:#2222bb">小</div>
<div class="t" style="left:1px;top:473px;width:81px;height:25px;line-height:25px;color:#ffffcc">世俱杯</div>
<div class="t" style="left:82px;top:473px;width:72px;height:25px;line-height:25px;">25-06-16</div>
<div class="t" style="left:154px;top:473px;width:138px;height:25px;line-height:25px;color:#1a7a1a">博塔弗戈(中)</div>
<div class="t" style="left:292px;top:473px;width:85px;height:25px;line-height:25px;"><span style="color:#d4202c">2-1</span>(2-0)</div>
<div class="t" style="left:377px;top:473px;width:37px;height:25px;line-height:25px;">0-4</div>
<div class="t" style="left:414px;top:473px;width:123px;height:25px;line-height:25px;">西雅图海湾人</div>
<div class="t" style="left:537px;top:473px;width:46px;height:25px;line-height:25px;">1.05</div>
<div class="t" style="left:583px;top:473px;width:80px;height:25px;line-height:25px;">平/半</div>
<div class="t" style="left:663px;top:473px;width:49px;height:25px;line-height:25px;">0.84</div>
<div class="t" style="left:712px;top:473px;width:62px;height:25px;line-height:25px;">2.19</div>
<div class="t" style="left:774px;top:473px;width:62px;height:25px;line-height:25px;">3.30</div>
<div class="t" style="left:836px;top:473px;width:64px;height:25px;line-height:25px;">3.44</div>
<div class="t" style="left:900px;top:473px;width:37px;height:25px;line-height:25px;color:#d4202c">胜</div>
<div class="t" style="left:937px;top:473px;width:36px;height:25px;line-height:25px;color:#d4202c">赢</div>
<div class="t" style="left:973px;top:473px;width:55px;height:25px;line-height:25px;color:#d4202c">大</div>
<div class="t" style="left:1px;top:499px;width:81px;height:25px;line-height:25px;color:#ffffff">巴西甲</div>
<div class="t" style="left:82px;top:499px;width:72px;height:25px;line-height:25px;">25-06-05</div>
<div class="t" style="left:154px;top:499px;width:138px;height:25px;line-height:25px;color:#1a7a1a">博塔弗戈</div>
<div class="t" style="left:292px;top:499px;width:85px;height:25px;line-height:25px;"><span style="color:#d4202c">3-2</span>(1-0)</div>
<div class="t" style="left:377px;top:499px;width:37px;height:25px;line-height:25px;">6-0</div>
<div class="t" style="left:414px;top:499px;width:123px;height:25px;line-height:25px;">塞阿拉</div>
<div class="t" style="left:537px;top:499px;width:46px;height:25px;line-height:25px;">1.02</div>
<div class="t" style="left:583px;top:499px;width:80px;height:25px;line-height:25px;">一球</div>
<div class="t" style="left:663px;top:499px;width:49px;height:25px;line-height:25px;">0.86</div>
<div class="t" style="left:712px;top:499px;width:62px;height:25px;line-height:25px;">1.56</div>
<div class="t" style="left:774px;top:499px;width:62px;height:25px;line-height:25px;">3.72</div>
<div class="t" style="left:836px;top:499px;width:64px;height:25px;line-height:25px;">6.34</div>
<div class="t" style="left:900px;top:499px;width:37px;height:25px;line-height:25px;color:#d4202c">胜</div>
<div class="t" style="left:937px;top:499px;width:36px;height:25px;line-height:25px;color:#228822">走</div>
<div class="t" style="left:973px;top:499px;width:55px;height:25px;line-height:25px;color:#d4202c">大</div>
<div class="t" style="left:1px;top:525px;width:81px;height:25px;line-height:25px;color:#ffffff">巴西甲</div>
<div class="t" style="left:82px;top:525px;width:72px;height:25px;line-height:25px;">25-06-02</div>
<div class="t" style="left:154px;top:525px;width:138px;height:25px;line-height:25px;"><span class="bd">1</span>桑托斯</div>
<div class="t" style="left:292px;top:525px;width:85px;height:25px;line-height:25px;"><span style="color:#d4202c">0-1</span>(0-0)</div>
<div class="t" style="left:377px;top:525px;width:37px;height:25px;line-height:25px;">5-4</div>
<div class="t" style="left:414px;top:525px;width:123px;height:25px;line-height:25px;color:#1a7a1a">博塔弗戈</div>
<div class="t" style="left:537px;top:525px;width:46px;height:25px;line-height:25px;">1.08</div>
<div class="t" style="left:583px;top:525px;width:80px;height:25px;line-height:25px;">半球</div>
<div class="t" style="left:663px;top:525px;width:49px;height:25px;line-height:25px;">0.80</div>
<div class="t" style="left:712px;top:525px;width:62px;height:25px;line-height:25px;">2.17</div>
<div class="t" style="left:774px;top:525px;width:62px;height:25px;line-height:25px;">3.07</div>
<div class="t" style="left:836px;top:525px;width:64px;height:25px;line-height:25px;">3.57</div>
<div class="t" style="left:900px;top:525px;width:37px;height:25px;line-height:25px;color:#d4202c">胜</div>
<div class="t" style="left:937px;top:525px;width:36px;height:25px;line-height:25px;color:#d4202c">赢</div>
<div class="t" style="left:973px;top:525px;width:55px;height:25px;line-height:25px;color:#2222bb">小</div>
<div class="t" style="left:1px;top:551px;width:81px;height:25px;line-height:25px;color:#ffffff">解放者杯</div>
<div class="t" style="left:82px;top:551px;width:72px;height:25px;line-height:25px;">25-05-28</div>
<div class="t" style="left:154px;top:551px;width:138px;height:25px;line-height:25px;color:#1a7a1a"><span class="bd">1</span>博塔弗戈</div>
<div class="t" style="left:292px;top:551px;width:85px;height:25px;line-height:25px;"><span style="color:#d4202c">1-0</span>(1-0)</div>
<div class="t" style="left:377px;top:551px;width:37px;height:25px;line-height:25px;">4-5</div>
<div class="t" style="left:414px;top:551px;width:123px;height:25px;line-height:25px;">智利大学</div>
<div class="t" style="left:537px;top:551px;width:46px;height:25px;line-height:25px;">0.97</div>
<div class="t" style="left:583px;top:551px;width:80px;height:25px;line-height:25px;">一/球半</div>
<div class="t" style="left:663px;top:551px;width:49px;height:25px;line-height:25px;">0.91</div>
<div class="t" style="left:712px;top:551px;width:62px;height:25px;line-height:25px;">1.46</div>
<div class="t" style="left:774px;top:551px;width:62px;height:25px;line-height:25px;">4.29</div>
<div class="t" style="left:836px;top:551px;width:64px;height:25px;line-height:25px;">6.48</div>
<div class="t" style="left:900px;top:551px;width:37px;height:25px;line-height:25px;color:#d4202c">胜</div>
<div class="t" style="left:937px;top:551px;width:36px;height:25px;line-height:25px;color:#2222bb">输</div>
<div class="t" style="left:973px;top:551px;width:55px;height:25px;line-height:25px;color:#2222bb">小</div>
<div class="t" style="left:1px;top:577px;width:81px;height:25px;line-height:25px;color:#ffffff">巴西杯</div>
<div class="t" style="left:82px;top:577px;width:72px;height:25px;line-height:25px;">25-05-23</div>
<div class="t" style="left:154px;top:577px;width:138px;height:25px;line-height:25px;">首都(中)</div>
<div class="t" style="left:292px;top:577px;width:85px;height:25px;line-height:25px;"><span style="color:#d4202c">1-0</span>(1-0)</div>
<div class="t" style="left:377px;top:577px;width:37px;height:25px;line-height:25px;">4-9</div>
<div class="t" style="left:414px;top:577px;width:123px;height:25px;line-height:25px;color:#1a7a1a">博塔弗戈</div>
<div class="t" style="left:537px;top:577px;width:46px;height:25px;line-height:25px;">1.01</div>
<div class="t" style="left:583px;top:577px;width:80px;height:25px;line-height:25px;">受半/一</div>
<div class="t" style="left:663px;top:577px;width:49px;height:25px;line-height:25px;">0.81</div>
<div class="t" style="left:712px;top:577px;width:62px;height:25px;line-height:25px;">5.35</div>
<div class="t" style="left:774px;top:577px;width:62px;height:25px;line-height:25px;">3.79</div>
<div class="t" style="left:836px;top:577px;width:64px;height:25px;line-height:25px;">1.58</div>
<div class="t" style="left:900px;top:577px;width:37px;height:25px;line-height:25px;color:#2222bb">负</div>
<div class="t" style="left:937px;top:577px;width:36px;height:25px;line-height:25px;color:#2222bb">输</div>
<div class="t" style="left:973px;top:577px;width:55px;height:25px;line-height:25px;color:#2222bb">小</div>
<div class="t" style="left:1px;top:603px;width:81px;height:25px;line-height:25px;color:#ffffff">巴西甲</div>
<div class="t" style="left:82px;top:603px;width:72px;height:25px;line-height:25px;">25-05-19</div>
<div class="t" style="left:154px;top:603px;width:138px;height:25px;line-height:25px;">弗拉门戈</div>
<div class="t" style="left:292px;top:603px;width:85px;height:25px;line-height:25px;"><span style="color:#d4202c">0-0</span>(0-0)</div>
<div class="t" style="left:377px;top:603px;width:37px;height:25px;line-height:25px;">7-3</div>
<div class="t" style="left:414px;top:603px;width:123px;height:25px;line-height:25px;color:#1a7a1a">博塔弗戈</div>
<div class="t" style="left:537px;top:603px;width:46px;height:25px;line-height:25px;">1.04</div>
<div class="t" style="left:583px;top:603px;width:80px;height:25px;line-height:25px;">半/一</div>
<div class="t" style="left:663px;top:603px;width:49px;height:25px;line-height:25px;">0.84</div>
<div class="t" style="left:712px;top:603px;width:62px;height:25px;line-height:25px;">1.72</div>
<div class="t" style="left:774px;top:603px;width:62px;height:25px;line-height:25px;">3.44</div>
<div class="t" style="left:836px;top:603px;width:64px;height:25px;line-height:25px;">5.05</div>
<div class="t" style="left:900px;top:603px;width:37px;height:25px;line-height:25px;color:#228822">平</div>
<div class="t" style="left:937px;top:603px;width:36px;height:25px;line-height:25px;color:#d4202c">赢</div>
<div class="t" style="left:973px;top:603px;width:55px;height:25px;line-height:25px;color:#2222bb">小</div>
<div class="t" style="left:1px;top:629px;width:81px;height:25px;line-height:25px;color:#ffffff">解放者杯</div>
<div class="t" style="left:82px;top:629px;width:72px;height:25px;line-height:25px;">25-05-15</div>
<div class="t" style="left:154px;top:629px;width:138px;height:25px;line-height:25px;color:#1a7a1a">博塔弗戈</div>
<div class="t" style="left:292px;top:629px;width:85px;height:25px;line-height:25px;"><span style="color:#d4202c">3-2</span>(1-0)</div>
<div class="t" style="left:377px;top:629px;width:37px;height:25px;line-height:25px;">9-1</div>
<div class="t" style="left:414px;top:629px;width:123px;height:25px;line-height:25px;">拉普拉塔大学生</div>
<div class="t" style="left:537px;top:629px;width:46px;height:25px;line-height:25px;">0.85</div>
<div class="t" style="left:583px;top:629px;width:80px;height:25px;line-height:25px;">半球</div>
<div class="t" style="left:663px;top:629px;width:49px;height:25px;line-height:25px;">1.03</div>
<div class="t" style="left:712px;top:629px;width:62px;height:25px;line-height:25px;">1.86</div>
<div class="t" style="left:774px;top:629px;width:62px;height:25px;line-height:25px;">3.29</div>
<div class="t" style="left:836px;top:629px;width:64px;height:25px;line-height:25px;">4.32</div>
<div class="t" style="left:900px;top:629px;width:37px;height:25px;line-height:25px;color:#d4202c">胜</div>
<div class="t" style="left:937px;top:629px;width:36px;height:25px;line-height:25px;color:#d4202c">赢</div>
<div class="t" style="left:973px;top:629px;width:55px;height:25px;line-height:25px;color:#d4202c">大</div>
<div class="t" style="left:1px;top:655px;width:81px;height:25px;line-height:25px;color:#ffffff">巴西甲</div>
<div class="t" style="left:82px;top:655px;width:72px;height:25px;line-height:25px;">25-05-12</div>
<div class="t" style="left:154px;top:655px;width:138px;height:25px;line-height:25px;color:#1a7a1a">博塔弗戈</div>
<div class="t" style="left:292px;top:655px;width:85px;height:25px;line-height:25px;"><span style="color:#d4202c">4-0</span>(2-0)</div>
<div class="t" style="left:377px;top:655px;width:37px;height:25px;line-height:25px;">2-7</div>
<div class="t" style="left:414px;top:655px;width:123px;height:25px;line-height:25px;">巴西国际</div>
<div class="t" style="left:537px;top:655px;width:46px;height:25px;line-height:25px;">0.94</div>
<div class="t" style="left:583px;top:655px;width:80px;height:25px;line-height:25px;">半/一</div>
<div class="t" style="left:663px;top:655px;width:49px;height:25px;line-height:25px;">0.94</div>
<div class="t" style="left:712px;top:655px;width:62px;height:25px;line-height:25px;">1.73</div>
<div class="t" style="left:774px;top:655px;width:62px;height:25px;line-height:25px;">3.41</div>
<div class="t" style="left:836px;top:655px;width:64px;height:25px;line-height:25px;">5.13</div>
<div class="t" style="left:900px;top:655px;width:37px;height:25px;line-height:25px;color:#d4202c">胜</div>
<div class="t" style="left:937px;top:655px;width:36px;height:25px;line-height:25px;color:#d4202c">赢</div>
<div class="t" style="left:973px;top:655px;width:55px;height:25px;line-height:25px;color:#d4202c">大</div>
<div class="t" style="left:1px;top:681px;width:81px;height:25px;line-height:25px;color:#ffffff">解放者杯</div>
<div class="t" style="left:82px;top:681px;width:72px;height:25px;line-height:25px;">25-05-07</div>
<div class="t" style="left:154px;top:681px;width:138px;height:25px;line-height:25px;">卡拉波波</div>
<div class="t" style="left:292px;top:681px;width:85px;height:25px;line-height:25px;"><span style="color:#d4202c">1-2</span>(0-1)</div>
<div class="t" style="left:377px;top:681px;width:37px;height:25px;line-height:25px;">9-2</div>
<div class="t" style="left:414px;top:681px;width:123px;height:25px;line-height:25px;color:#1a7a1a">博塔弗戈</div>
<div class="t" style="left:537px;top:681px;width:46px;height:25px;line-height:25px;">0.88</div>
<div class="t" style="left:583px;top:681px;width:80px;height:25px;line-height:25px;">受半/一</div>
<div class="t" style="left:663px;top:681px;width:49px;height:25px;line-height:25px;">1.00</div>
<div class="t" style="left:712px;top:681px;width:62px;height:25px;line-height:25px;">5.28</div>
<div class="t" style="left:774px;top:681px;width:62px;height:25px;line-height:25px;">3.39</div>
<div class="t" style="left:836px;top:681px;width:64px;height:25px;line-height:25px;">1.70</div>
<div class="t" style="left:900px;top:681px;width:37px;height:25px;line-height:25px;color:#d4202c">胜</div>
<div class="t" style="left:937px;top:681px;width:36px;height:25px;line-height:25px;color:#d4202c">赢</div>
<div class="t" style="left:973px;top:681px;width:55px;height:25px;line-height:25px;color:#d4202c">大</div>
<div class="t" style="left:1px;top:707px;width:1027px;height:25px;line-height:25px;letter-spacing:0.16px">近<span style="color:#d4202c">10</span>场,胜8平1负1, 胜率:<span style="color:#d4202c">80%</span> 让胜率:<span style="color:#d4202c">70%</span> 大率:<span style="color:#d4202c">50%</span> 单率:<span style="color:#d4202c">80%</span></div>
</body></html>
